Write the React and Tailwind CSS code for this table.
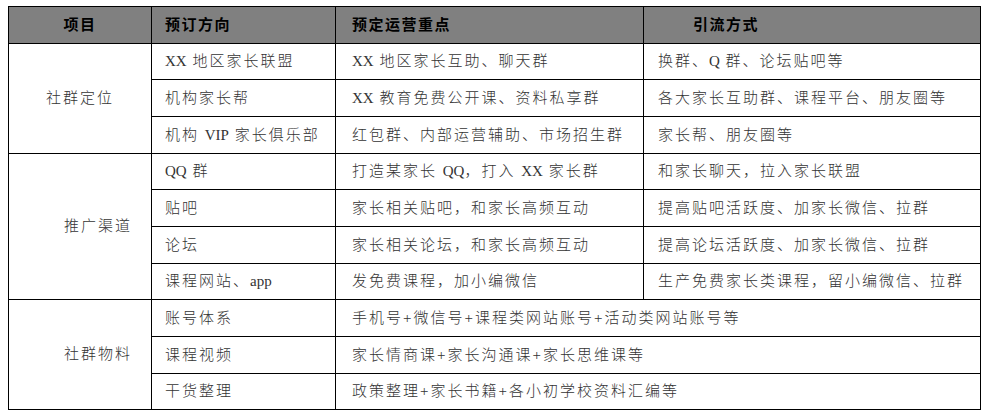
import React from "react";

const font = { fontFamily: '"Liberation Serif", "Noto Sans CJK SC", serif' };

const sections = [
  {
    label: "社群定位",
    labelPad: "pl-[37px]",
    rows: [
      ["XX 地区家长联盟", "XX 地区家长互助、聊天群", "换群、Q 群、论坛贴吧等"],
      ["机构家长帮", "XX 教育免费公开课、资料私享群", "各大家长互助群、课程平台、朋友圈等"],
      ["机构 VIP 家长俱乐部", "红包群、内部运营辅助、市场招生群", "家长帮、朋友圈等"],
    ],
  },
  {
    label: "推广渠道",
    labelPad: "pl-[55px]",
    rows: [
      ["QQ 群", "打造某家长 QQ，打入 XX 家长群", "和家长聊天，拉入家长联盟"],
      ["贴吧", "家长相关贴吧，和家长高频互动", "提高贴吧活跃度、加家长微信、拉群"],
      ["论坛", "家长相关论坛，和家长高频互动", "提高论坛活跃度、加家长微信、拉群"],
      ["课程网站、app", "发免费课程，加小编微信", "生产免费家长类课程，留小编微信、拉群"],
    ],
  },
  {
    label: "社群物料",
    labelPad: "pl-[55px]",
    rows: [
      ["账号体系", "手机号+微信号+课程类网站账号+活动类网站账号等"],
      ["课程视频", "家长情商课+家长沟通课+家长思维课等"],
      ["干货整理", "政策整理+家长书籍+各小初学校资料汇编等"],
    ],
  },
];

const heights = ["h-[36px]", "h-[37px]", "h-[37px]", "h-[36px]", "h-[37px]", "h-[37px]", "h-[36px]", "h-[37px]", "h-[37px]", "h-[36px]"];

function T({ text }) {
  const parts = text.split(/([A-Za-z]+)/);
  return (
    <>
      {parts.map((p, i) =>
        /^[A-Za-z]+$/.test(p) ? (
          <span key={i} className="tracking-normal">{p}</span>
        ) : (
          <span key={i}>{p}</span>
        )
      )}
    </>
  );
}

export default function App() {
  let idx = 0;
  return (
    <div className="w-[989px] h-[414px] bg-white pt-[6px] pl-[8px]" style={font}>
      <table className="table-fixed border-collapse w-[972px] text-[15px] tracking-[2px] text-[#333] font-light">
        <colgroup>
          <col className="w-[143px]" />
          <col className="w-[184px]" />
          <col className="w-[308px]" />
          <col className="w-[337px]" />
        </colgroup>
        <thead>
          <tr className="h-[37px] bg-[#808080] text-black">
            <th className="border border-black text-center font-bold tracking-[1.5px]">项目</th>
            <th className="border border-black text-left pl-[13px] font-bold tracking-[1.5px]">预订方向</th>
            <th className="border border-black text-left pl-[16px] font-bold tracking-[1.5px]">预定运营重点</th>
            <th className="border border-black text-left pl-[49px] font-bold tracking-[1.5px]">引流方式</th>
          </tr>
        </thead>
        <tbody>
          {sections.map((s) =>
            s.rows.map((r, i) => {
              const h = heights[idx++];
              return (
                <tr key={s.label + i} className={h}>
                  {i === 0 && (
                    <td rowSpan={s.rows.length} className={`border border-black text-left ${s.labelPad}`}>
                      {s.label}
                    </td>
                  )}
                  <td className="border border-black pl-[13px] whitespace-nowrap"><T text={r[0]} /></td>
                  {r.length === 3 ? (
                    <>
                      <td className="border border-black pl-[16px] whitespace-nowrap"><T text={r[1]} /></td>
                      <td className="border border-black pl-[14px] whitespace-nowrap"><T text={r[2]} /></td>
                    </>
                  ) : (
                    <td colSpan={2} className="border border-black pl-[16px] whitespace-nowrap"><T text={r[1]} /></td>
                  )}
                </tr>
              );
            })
          )}
        </tbody>
      </table>
    </div>
  );
}
